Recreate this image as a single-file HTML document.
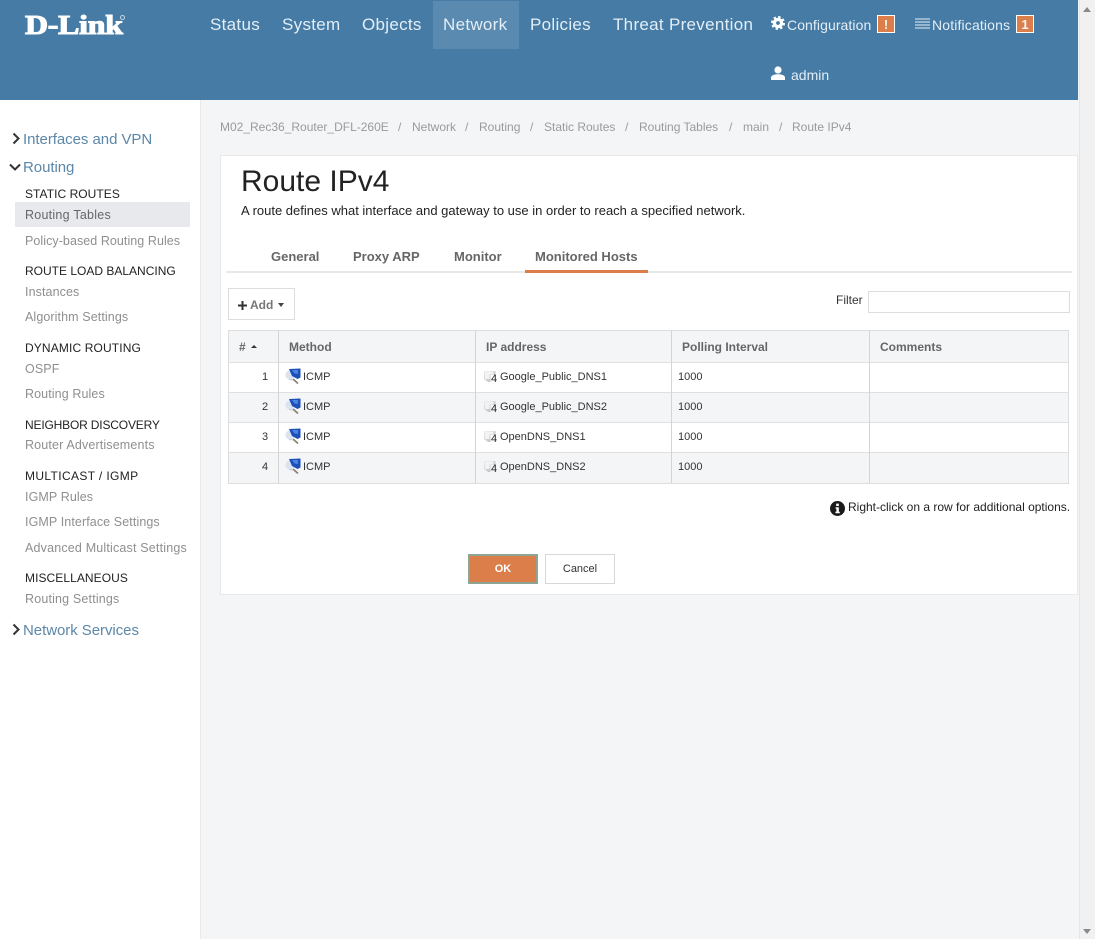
<!DOCTYPE html>
<html><head><meta charset="utf-8"><title>Route IPv4</title>
<style>
html,body{margin:0;padding:0;width:1095px;height:939px;overflow:hidden;background:#f4f5f7;font-family:"Liberation Sans",sans-serif}
.a{position:absolute;white-space:nowrap}
.t{position:absolute;white-space:nowrap;line-height:20px;height:20px}
.nav{color:#e3eef6;font-size:17px;letter-spacing:.3px;top:15px}
.nav2{color:#e3eef6;font-size:14px;top:15px}
.bc{color:#9a9a9a;font-size:12px;top:117px}
.sec{color:#5c87a8;font-size:15px;letter-spacing:-.05px}
.h{color:#222;font-size:12px}
.l{color:#8f8f8f;font-size:12.5px;letter-spacing:.1px}
.tab{color:#666;font-size:13px;font-weight:bold;top:247px}
.th{color:#666;font-size:12px;font-weight:bold;top:337px}
.td{color:#333;font-size:11px;}
.b{position:absolute;background:#e0e0e0}
</style></head>
<body>
<div class="a" style="left:0;top:0;width:1078px;height:100px;background:#457ba5"></div>
<div class="a" style="left:433px;top:1px;width:86px;height:48px;background:#5a8aaf"></div>
<div class="a" style="left:0;top:100px;width:200px;height:839px;background:#fff;border-right:1px solid #e9e9e9"></div>
<div class="a" style="left:1079px;top:0;width:16px;height:939px;background:#f1f1f1;border-left:1px solid #e6e6e6;box-sizing:border-box"></div>
<div class="a" style="left:1083px;top:7px;width:0;height:0;border:4px solid transparent;border-top:0;border-bottom:5px solid #8a8a8a"></div>
<div class="a" style="left:1083px;top:929px;width:0;height:0;border:4px solid transparent;border-bottom:0;border-top:5px solid #8a8a8a"></div>

<div class="a" style="left:25px;top:8px;line-height:34px;font-family:'Liberation Serif',serif;font-weight:bold;font-size:27px;color:#fff;-webkit-text-stroke:1.1px #fff;letter-spacing:-.2px;transform:scaleX(1.18);transform-origin:left center">D-Link</div>
<div class="a" style="left:120px;top:15px;width:3px;height:3px;border:1px solid #c5d7e4;border-radius:50%"></div>

<div class="t nav" style="left:210px">Status</div>
<div class="t nav" style="left:282px">System</div>
<div class="t nav" style="left:362px">Objects</div>
<div class="t nav" style="left:443px">Network</div>
<div class="t nav" style="left:530px">Policies</div>
<div class="t nav" style="left:613px">Threat Prevention</div>

<svg class="a" style="left:771px;top:16px" width="14" height="14" viewBox="0 0 14 14"><circle cx="7" cy="7" r="3.6" fill="none" stroke="#fff" stroke-width="3.4"/><circle cx="7" cy="7" r="6" fill="none" stroke="#fff" stroke-width="2" stroke-dasharray="2.4 2.31"/></svg>
<div class="t nav2" style="left:787px;letter-spacing:.08px">Configuration</div>
<div class="a" style="left:877px;top:15px;width:16px;height:16px;background:#dc7e49;border:1px solid #fff;color:#f4f4f4;font-size:13px;font-weight:bold;line-height:17px;text-align:center">!</div>
<svg class="a" style="left:915px;top:18px" width="16" height="11" viewBox="0 0 16 11"><path d="M0 1h15M0 4h15M0 7h15M0 10h15" stroke="#e8f0f6" stroke-width="1" fill="none"/></svg>
<div class="t nav2" style="left:932px;letter-spacing:.15px">Notifications</div>
<div class="a" style="left:1016px;top:15px;width:16px;height:16px;background:#dc7e49;border:1px solid #fff;color:#f4f4f4;font-size:13px;font-weight:bold;line-height:17px;text-align:center">1</div>
<svg class="a" style="left:771px;top:66px" width="14" height="14" viewBox="0 0 14 14"><circle cx="7" cy="4" r="3.6" fill="#fff"/><path d="M0 14V11.5C0 9.5 3 8.2 7 8.2S14 9.5 14 11.5V14Z" fill="#fff"/></svg>
<div class="t nav2" style="left:791px;top:65px">admin</div>

<!-- sidebar -->
<svg class="a" style="left:12px;top:132px" width="9" height="13" viewBox="0 0 9 13"><path d="M1.5 1.5L6.5 6.5L1.5 11.5" fill="none" stroke="#333" stroke-width="2"/></svg>
<div class="t sec" style="left:23px;top:130px">Interfaces and VPN</div>
<svg class="a" style="left:9px;top:163px" width="12" height="9" viewBox="0 0 12 9"><path d="M1 1.5L6 6.5L11 1.5" fill="none" stroke="#333" stroke-width="2"/></svg>
<div class="t sec" style="left:23px;top:158px">Routing</div>
<div class="t h" style="left:25px;top:184px;letter-spacing:.05px">STATIC ROUTES</div>
<div class="a" style="left:15px;top:202px;width:175px;height:25px;background:#e8e9ec"></div>
<div class="t l" style="left:25px;top:205px;color:#666;letter-spacing:.25px">Routing Tables</div>
<div class="t l" style="left:25px;top:231px;letter-spacing:.06px">Policy-based Routing Rules</div>
<div class="t h" style="left:25px;top:261px">ROUTE LOAD BALANCING</div>
<div class="t l" style="left:25px;top:282px">Instances</div>
<div class="t l" style="left:25px;top:307px">Algorithm Settings</div>
<div class="t h" style="left:25px;top:338px;letter-spacing:.13px">DYNAMIC ROUTING</div>
<div class="t l" style="left:25px;top:359px">OSPF</div>
<div class="t l" style="left:25px;top:384px">Routing Rules</div>
<div class="t h" style="left:25px;top:415px;letter-spacing:-.17px">NEIGHBOR DISCOVERY</div>
<div class="t l" style="left:25px;top:435px;letter-spacing:.15px">Router Advertisements</div>
<div class="t h" style="left:25px;top:466px;letter-spacing:.37px">MULTICAST / IGMP</div>
<div class="t l" style="left:25px;top:487px">IGMP Rules</div>
<div class="t l" style="left:25px;top:512px">IGMP Interface Settings</div>
<div class="t l" style="left:25px;top:538px;letter-spacing:.18px">Advanced Multicast Settings</div>
<div class="t h" style="left:25px;top:568px;letter-spacing:.07px">MISCELLANEOUS</div>
<div class="t l" style="left:25px;top:589px;letter-spacing:.17px">Routing Settings</div>
<svg class="a" style="left:12px;top:623px" width="9" height="13" viewBox="0 0 9 13"><path d="M1.5 1.5L6.5 6.5L1.5 11.5" fill="none" stroke="#333" stroke-width="2"/></svg>
<div class="t sec" style="left:23px;top:621px">Network Services</div>

<!-- breadcrumb -->
<div class="t bc" style="left:220px">M02_Rec36_Router_DFL-260E</div>
<div class="t bc" style="left:398px">/</div>
<div class="t bc" style="left:412px">Network</div>
<div class="t bc" style="left:465px">/</div>
<div class="t bc" style="left:479px">Routing</div>
<div class="t bc" style="left:530px">/</div>
<div class="t bc" style="left:544px">Static Routes</div>
<div class="t bc" style="left:625px">/</div>
<div class="t bc" style="left:639px">Routing Tables</div>
<div class="t bc" style="left:729px">/</div>
<div class="t bc" style="left:743px">main</div>
<div class="t bc" style="left:779px">/</div>
<div class="t bc" style="left:792px">Route IPv4</div>

<!-- panel -->
<div class="a" style="left:220px;top:155px;width:858px;height:440px;background:#fff;border:1px solid #e9e9e9;box-sizing:border-box"></div>
<div class="a" style="left:241px;top:164px;font-size:30px;line-height:36px;color:#222">Route IPv4</div>
<div class="t" style="left:241px;top:201px;font-size:13px;color:#222">A route defines what interface and gateway to use in order to reach a specified network.</div>

<div class="t tab" style="left:271px">General</div>
<div class="t tab" style="left:353px">Proxy ARP</div>
<div class="t tab" style="left:454px">Monitor</div>
<div class="t tab" style="left:535px">Monitored Hosts</div>
<div class="a" style="left:226px;top:271px;width:846px;height:2px;background:#e8e8e8"></div>
<div class="a" style="left:525px;top:270px;width:123px;height:3px;background:#dc7e49"></div>

<div class="a" style="left:228px;top:288px;width:67px;height:32px;border:1px solid #ddd;box-sizing:border-box;background:#fff"></div>
<svg class="a" style="left:238px;top:301px" width="9" height="9" viewBox="0 0 9 9"><path d="M4.5 0V9M0 4.5H9" stroke="#333" stroke-width="2"/></svg>
<div class="t" style="left:250px;top:295px;font-size:12px;font-weight:bold;color:#777">Add</div>
<div class="a" style="left:278px;top:303px;width:0;height:0;border:3.5px solid transparent;border-bottom:0;border-top:4px solid #444"></div>

<div class="t" style="left:836px;top:290px;font-size:12px;color:#333">Filter</div>
<div class="a" style="left:868px;top:291px;width:202px;height:22px;border:1px solid #ddd;box-sizing:border-box;background:#fff"></div>

<!-- table -->
<div class="a" style="left:228px;top:330px;width:841px;height:154px;border:1px solid #ddd;box-sizing:border-box;background:#fff"></div>
<div class="a" style="left:229px;top:331px;width:839px;height:31px;background:#f4f5f7"></div>
<div class="a" style="left:229px;top:393px;width:839px;height:29px;background:#f4f5f7"></div>
<div class="a" style="left:229px;top:453px;width:839px;height:30px;background:#f4f5f7"></div>
<div class="b" style="left:229px;top:362px;width:839px;height:1px"></div>
<div class="b" style="left:229px;top:392px;width:839px;height:1px"></div>
<div class="b" style="left:229px;top:422px;width:839px;height:1px"></div>
<div class="b" style="left:229px;top:452px;width:839px;height:1px"></div>
<div class="b" style="left:278px;top:331px;width:1px;height:152px;background:#d4d4d4"></div>
<div class="b" style="left:475px;top:331px;width:1px;height:152px;background:#d4d4d4"></div>
<div class="b" style="left:671px;top:331px;width:1px;height:152px;background:#d4d4d4"></div>
<div class="b" style="left:869px;top:331px;width:1px;height:152px;background:#d4d4d4"></div>

<div class="t th" style="left:239px">#</div>
<div class="a" style="left:251px;top:345px;width:0;height:0;border:3.5px solid transparent;border-top:0;border-bottom:3px solid #333"></div>
<div class="t th" style="left:289px">Method</div>
<div class="t th" style="left:486px">IP address</div>
<div class="t th" style="left:682px">Polling Interval</div>
<div class="t th" style="left:880px">Comments</div>

<svg width="0" height="0" style="position:absolute"><defs>
<linearGradient id="gr" x1="0" y1="0" x2="1" y2="1"><stop offset="0" stop-color="#ececec"/><stop offset="1" stop-color="#b8b8b8"/></linearGradient>
<g id="ic"><circle cx="5" cy="7" r="4.6" fill="#dbe4ee"/><path d="M4 1L15.5 .5V9.5L12.5 11L7 8Z" fill="#1c50b8"/><path d="M7 2L13 2V6L9.5 5.5Z" fill="#4a84e2"/><path d="M8 11L13 15.5" stroke="#8b7f70" stroke-width="1.7"/><path d="M4 11.5L8 12" stroke="#c3ccd6"/></g>
<g id="ip"><path d="M0 1H11.5V5H6.5V12H4L0 9Z" fill="url(#gr)"/><path d="M1 1.5H9.5V4.5H5.5V9H1Z" fill="#f3f3f3"/></g>
</defs></svg>

<div class="t td" style="left:262px;top:367px">1</div>
<svg class="a" style="left:285px;top:368px" width="16" height="16"><use href="#ic"/></svg>
<div class="t td" style="left:303px;top:367px">ICMP</div>
<svg class="a" style="left:484px;top:370px" width="13" height="13"><use href="#ip"/></svg>
<div class="a" style="left:491px;top:373px;font-size:11px;line-height:12px;color:#222">4</div>
<div class="t td" style="left:500px;top:367px">Google_Public_DNS1</div>
<div class="t td" style="left:678px;top:367px">1000</div>

<div class="t td" style="left:262px;top:397px">2</div>
<svg class="a" style="left:285px;top:398px" width="16" height="16"><use href="#ic"/></svg>
<div class="t td" style="left:303px;top:397px">ICMP</div>
<svg class="a" style="left:484px;top:400px" width="13" height="13"><use href="#ip"/></svg>
<div class="a" style="left:491px;top:403px;font-size:11px;line-height:12px;color:#222">4</div>
<div class="t td" style="left:500px;top:397px">Google_Public_DNS2</div>
<div class="t td" style="left:678px;top:397px">1000</div>

<div class="t td" style="left:262px;top:427px">3</div>
<svg class="a" style="left:285px;top:428px" width="16" height="16"><use href="#ic"/></svg>
<div class="t td" style="left:303px;top:427px">ICMP</div>
<svg class="a" style="left:484px;top:430px" width="13" height="13"><use href="#ip"/></svg>
<div class="a" style="left:491px;top:433px;font-size:11px;line-height:12px;color:#222">4</div>
<div class="t td" style="left:500px;top:427px">OpenDNS_DNS1</div>
<div class="t td" style="left:678px;top:427px">1000</div>

<div class="t td" style="left:262px;top:457px">4</div>
<svg class="a" style="left:285px;top:458px" width="16" height="16"><use href="#ic"/></svg>
<div class="t td" style="left:303px;top:457px">ICMP</div>
<svg class="a" style="left:484px;top:460px" width="13" height="13"><use href="#ip"/></svg>
<div class="a" style="left:491px;top:463px;font-size:11px;line-height:12px;color:#222">4</div>
<div class="t td" style="left:500px;top:457px">OpenDNS_DNS2</div>
<div class="t td" style="left:678px;top:457px">1000</div>

<svg class="a" style="left:830px;top:501px" width="15" height="15" viewBox="0 0 15 15"><circle cx="7.5" cy="7.5" r="7.5" fill="#1a1a1a"/><rect x="6.2" y="2.6" width="2.6" height="2.4" fill="#fff"/><path d="M5.6 6.2H8.8V10.8H9.8V12.2H5.4V10.8H6.4V7.6H5.6Z" fill="#fff"/></svg>
<div class="t" style="left:848px;top:497px;font-size:12px;color:#222">Right-click on a row for additional options.</div>

<div class="a" style="left:468px;top:554px;width:70px;height:30px;background:#dc7e49;border:2px solid #8fa593;box-sizing:border-box;color:#fff;font-size:11px;font-weight:bold;line-height:26px;text-align:center">OK</div>
<div class="a" style="left:545px;top:554px;width:70px;height:30px;background:#fff;border:1px solid #d8d8d8;box-sizing:border-box;color:#333;font-size:11px;line-height:28px;text-align:center">Cancel</div>
</body></html>
